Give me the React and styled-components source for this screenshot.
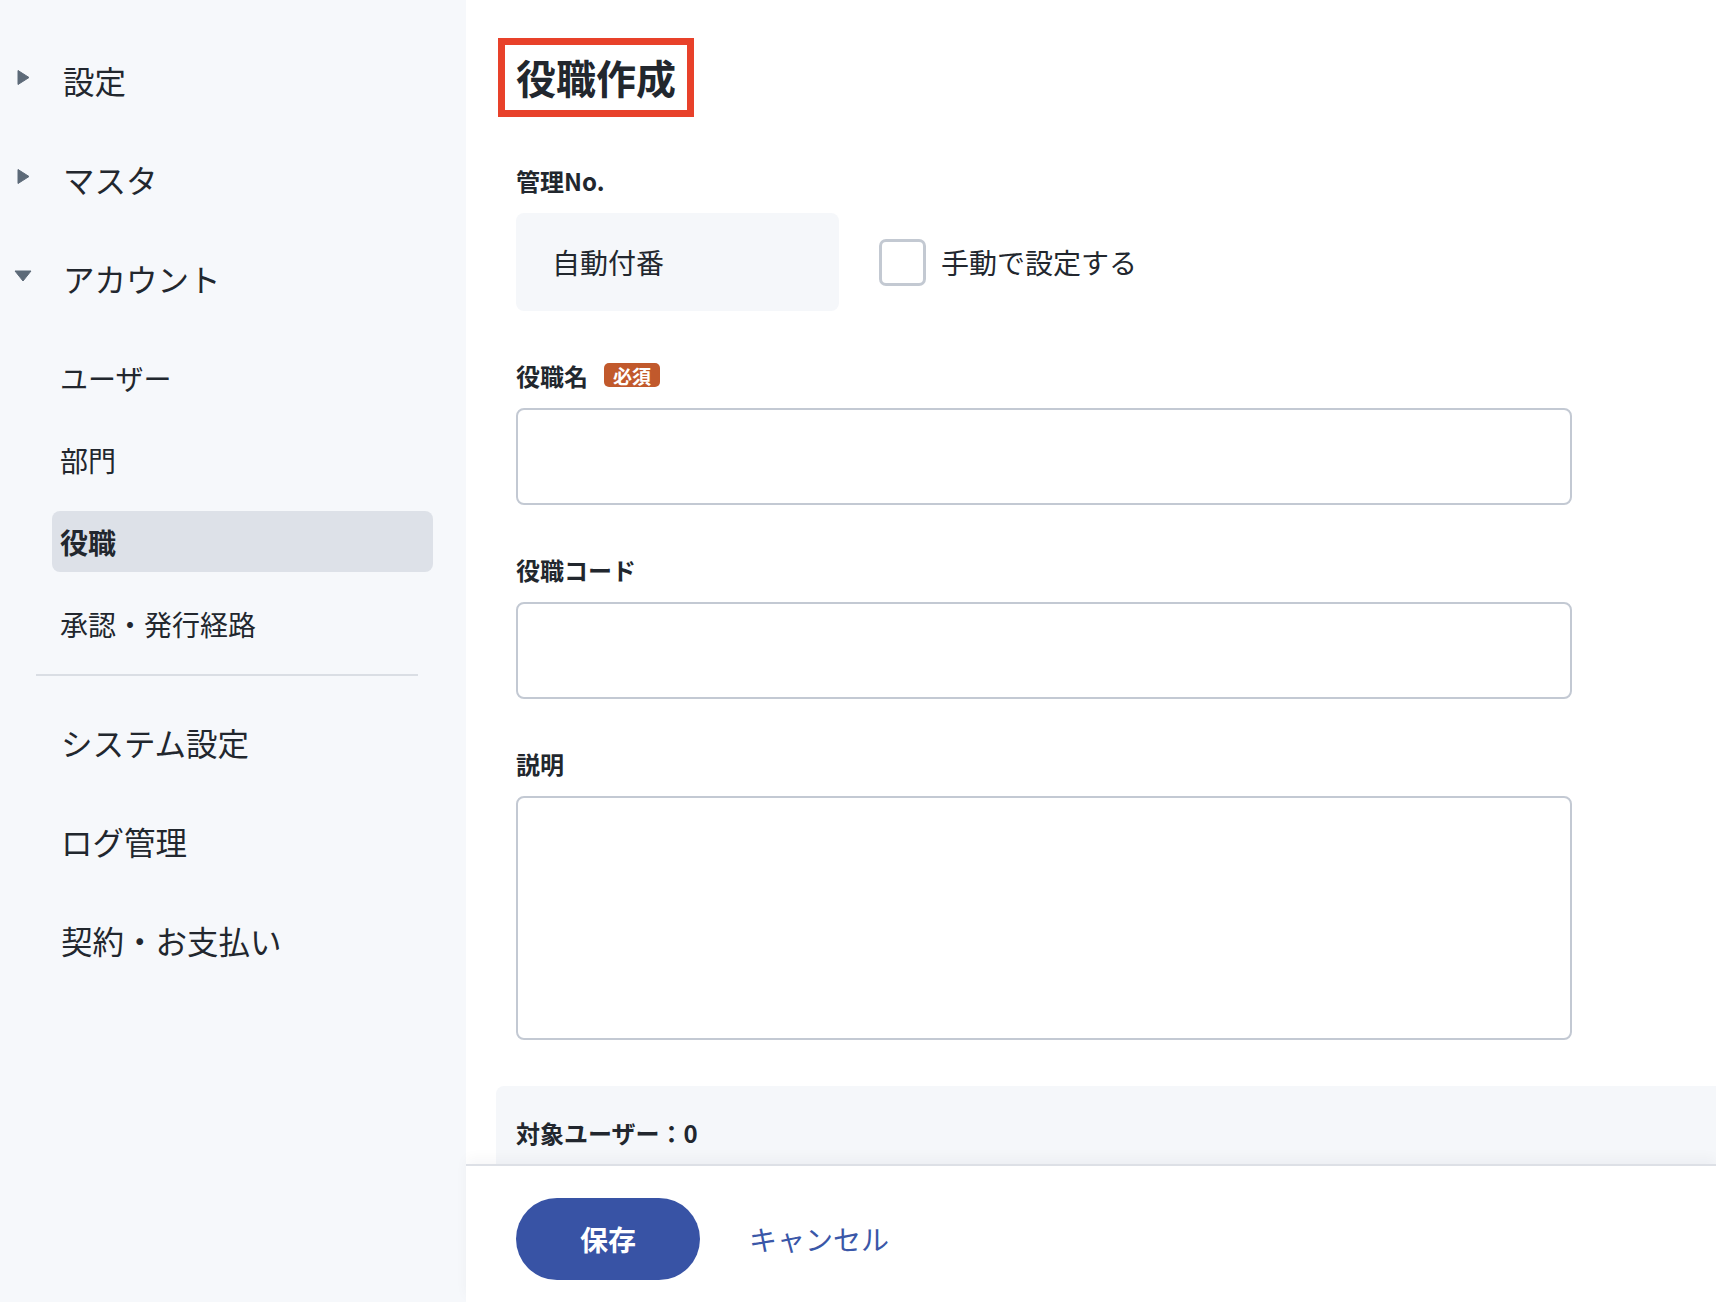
import React from "react";
import styled, { createGlobalStyle } from "styled-components";

const GlobalStyle = createGlobalStyle`
  html, body {
    margin: 0;
    padding: 0;
  }
  body {
    font-family: "Noto Sans CJK JP", "Noto Sans", sans-serif;
    color: #22272e;
    background: #fff;
  }
  * {
    box-sizing: border-box;
  }
`;

const Shell = styled.div`
  display: flex;
  height: 100vh;
  overflow: hidden;
`;

const Sidebar = styled.nav`
  flex: none;
  width: 466px;
  background: #f6f8fb;
  padding-top: 31px;
`;

const NavRow = styled.div`
  display: flex;
  align-items: center;
  height: 99px;
  padding-left: ${({ $indent }) => $indent || 13}px;
  font-size: 31.5px;
  line-height: 1;
`;

const Caret = styled.span`
  display: flex;
  align-items: center;
  justify-content: center;
  width: 20px;
  margin-right: 30px;
  margin-top: -6px;
  color: #5d6a78;
`;

const SubList = styled.div`
  display: flex;
  flex-direction: column;
  gap: 21px;
  margin: 19px 0 0 52px;
  width: 381px;
`;

const SubItem = styled.div`
  display: flex;
  align-items: center;
  height: 61px;
  padding-left: 8px;
  border-radius: 8px;
  font-size: 28px;
  font-weight: ${({ $active }) => ($active ? 700 : 400)};
  background: ${({ $active }) => ($active ? "#dde1e8" : "transparent")};
`;

const Divider = styled.hr`
  border: none;
  height: 2px;
  background: #dadee4;
  margin: 20px 0 17px 36px;
  width: 382px;
`;

const Main = styled.main`
  flex: 1;
  display: flex;
  flex-direction: column;
  min-width: 0;
`;

const Scroll = styled.div`
  flex: 1;
  overflow: hidden;
  padding: 38px 0 0 50px;
`;

const TitleMark = styled.div`
  display: inline-block;
  margin-left: -18px;
  padding: 0 11px;
  border: 7px solid #e8412a;
`;

const Title = styled.h1`
  margin: 0;
  font-size: 40px;
  line-height: 65px;
  font-weight: 700;
`;

const Field = styled.section`
  margin-top: ${({ $first }) => ($first ? 46 : 47)}px;
  width: 1056px;
`;

const Label = styled.div`
  display: flex;
  align-items: center;
  gap: 16px;
  height: 34px;
  margin-bottom: 16px;
  font-size: 24px;
  font-weight: 700;
`;

const Required = styled.span`
  display: inline-flex;
  align-items: center;
  justify-content: center;
  height: 24px;
  padding: 0 9px;
  border-radius: 5px;
  background: #c1592c;
  color: #fff;
  font-size: 19px;
  font-weight: 700;
  line-height: 1;
`;

const NumberRow = styled.div`
  display: flex;
  align-items: center;
`;

const AutoBox = styled.div`
  display: flex;
  align-items: center;
  width: 323px;
  height: 98px;
  padding-left: 36px;
  border-radius: 8px;
  background: #f5f7fa;
  font-size: 28px;
`;

const CheckLabel = styled.label`
  display: flex;
  align-items: center;
  gap: 15px;
  margin-left: 40px;
  font-size: 28px;
`;

const CheckBox = styled.span`
  display: block;
  width: 47px;
  height: 47px;
  border: 3px solid #c3c9d2;
  border-radius: 7px;
  background: #fff;
`;

const TextInput = styled.input`
  display: block;
  width: 100%;
  height: 97px;
  border: 2px solid #c3c9d3;
  border-radius: 8px;
  background: #fff;
  font: inherit;
  font-size: 28px;
  padding: 0 24px;
  outline: none;
`;

const TextArea = styled.textarea`
  display: block;
  width: 100%;
  height: 244px;
  border: 2px solid #c3c9d3;
  border-radius: 8px;
  background: #fff;
  font: inherit;
  font-size: 28px;
  padding: 20px 24px;
  resize: none;
  outline: none;
`;

const UsersPanel = styled.section`
  margin: 46px 0 0 -20px;
  padding: 30px 0 0 20px;
  height: 220px;
  border-top-left-radius: 8px;
  background: #f5f7fa;
  font-size: 24px;
  font-weight: 700;
  line-height: 34px;
`;

const Footer = styled.footer`
  flex: none;
  display: flex;
  align-items: center;
  gap: 49px;
  height: 138px;
  padding: 10px 0 0 50px;
  border-top: 2px solid #dde0e6;
  background: #fff;
  box-shadow: 0 -6px 12px rgba(30, 40, 60, 0.035);
  position: relative;
`;

const SaveButton = styled.button`
  width: 184px;
  height: 82px;
  border: none;
  border-radius: 41px;
  background: #3853a5;
  color: #fff;
  font: inherit;
  font-size: 28px;
  font-weight: 700;
`;

const CancelButton = styled.button`
  border: none;
  background: none;
  padding: 0;
  color: #3a57a8;
  font: inherit;
  font-size: 28px;
`;

const CaretRight = () => (
  <svg width="13" height="17" viewBox="0 0 13 17">
    <path d="M1 1.5 L12 8.5 L1 15.5 Z" fill="currentColor" stroke="currentColor" strokeWidth="1" strokeLinejoin="round" />
  </svg>
);

const CaretDown = () => (
  <svg width="18" height="12" viewBox="0 0 18 12">
    <path d="M1 1 L17 1 L9 11 Z" fill="currentColor" stroke="currentColor" strokeWidth="1" strokeLinejoin="round" />
  </svg>
);

const subItems = ["ユーザー", "部門", "役職", "承認・発行経路"];
const lowerItems = ["システム設定", "ログ管理", "契約・お支払い"];

export default function App() {
  return (
    <>
      <GlobalStyle />
      <Shell>
        <Sidebar>
          <NavRow>
            <Caret><CaretRight /></Caret>設定
          </NavRow>
          <NavRow>
            <Caret><CaretRight /></Caret>マスタ
          </NavRow>
          <NavRow>
            <Caret><CaretDown /></Caret>アカウント
          </NavRow>
          <SubList>
            {subItems.map((item) => (
              <SubItem key={item} $active={item === "役職"}>
                {item}
              </SubItem>
            ))}
          </SubList>
          <Divider />
          {lowerItems.map((item) => (
            <NavRow key={item} $indent={61}>
              {item}
            </NavRow>
          ))}
        </Sidebar>

        <Main>
          <Scroll>
            <TitleMark>
              <Title>役職作成</Title>
            </TitleMark>

            <Field $first>
              <Label>管理No.</Label>
              <NumberRow>
                <AutoBox>自動付番</AutoBox>
                <CheckLabel>
                  <CheckBox />
                  手動で設定する
                </CheckLabel>
              </NumberRow>
            </Field>

            <Field>
              <Label>
                役職名<Required>必須</Required>
              </Label>
              <TextInput type="text" />
            </Field>

            <Field>
              <Label>役職コード</Label>
              <TextInput type="text" />
            </Field>

            <Field>
              <Label>説明</Label>
              <TextArea />
            </Field>

            <UsersPanel>対象ユーザー：0</UsersPanel>
          </Scroll>

          <Footer>
            <SaveButton>保存</SaveButton>
            <CancelButton>キャンセル</CancelButton>
          </Footer>
        </Main>
      </Shell>
    </>
  );
}
